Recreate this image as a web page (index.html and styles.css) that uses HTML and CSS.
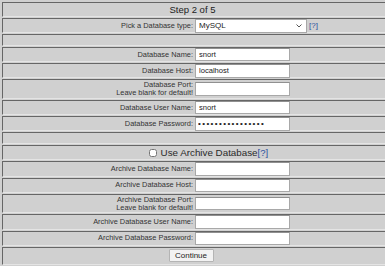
FILE: index.html
```html
<!DOCTYPE html>
<html lang="en">
<head>
    <meta charset="UTF-8">
    <title>Step 2 of 5</title>
    <link rel="stylesheet" href="styles.css">
</head>
<body>
    <div class="setup">
        <div class="row title">Step 2 of 5</div>
        <div class="row field">
            <span class="label">Pick a Database type:</span>
            <span class="control">
                <span class="select-wrap">
                    <select class="db-type">
                        <option>MySQL</option>
                    </select>
                    <svg class="chevron" width="6" height="4" viewBox="0 0 6 4">
                        <path d="M0.5 0.5 L3 3 L5.5 0.5" fill="none" stroke="#555" stroke-width="1"/>
                    </svg>
                </span>
                <a class="help" href="#">[?]</a>
            </span>
        </div>
        <div class="row empty"></div>
        <div class="row field">
            <span class="label">Database Name:</span>
            <span class="control"><input type="text" value="snort"></span>
        </div>
        <div class="row field">
            <span class="label">Database Host:</span>
            <span class="control"><input type="text" value="localhost"></span>
        </div>
        <div class="row field tall">
            <span class="label">Database Port:<br>Leave blank for default!</span>
            <span class="control"><input type="text"></span>
        </div>
        <div class="row field">
            <span class="label">Database User Name:</span>
            <span class="control"><input type="text" value="snort"></span>
        </div>
        <div class="row field">
            <span class="label">Database Password:</span>
            <span class="control"><input type="password" value="passwordpassword"></span>
        </div>
        <div class="row empty"></div>
        <div class="row archive">
            <label><input type="checkbox"> Use Archive Database</label><a class="help" href="#">[?]</a>
        </div>
        <div class="row field">
            <span class="label">Archive Database Name:</span>
            <span class="control"><input type="text"></span>
        </div>
        <div class="row field">
            <span class="label">Archive Database Host:</span>
            <span class="control"><input type="text"></span>
        </div>
        <div class="row field tall">
            <span class="label">Archive Database Port:<br>Leave blank for default!</span>
            <span class="control"><input type="text"></span>
        </div>
        <div class="row field">
            <span class="label">Archive Database User Name:</span>
            <span class="control"><input type="text"></span>
        </div>
        <div class="row field">
            <span class="label">Archive Database Password:</span>
            <span class="control"><input type="password"></span>
        </div>
        <div class="row submit">
            <button>Continue</button>
        </div>
    </div>
</body>
</html>
```

FILE: styles.css
```css
body {
    margin: 0;
    background: #d0d0d0;
    font-family: 'Liberation Sans', Arial, sans-serif;
    color: #333;
    overflow: hidden;
}

.setup {
    width: 390px;
    padding: 2px 0 0 2px;
    display: flex;
    flex-direction: column;
    gap: 1px;
}

.row {
    border-top: 1px solid #666;
    border-left: 1px solid #666;
    border-bottom: 1px solid #e4e4e4;
}

.title {
    height: 13px;
    text-align: center;
    font-size: 9.5px;
    line-height: 13px;
    color: #222;
    padding-right: 10px;
}

.field {
    height: 13.3px;
    display: grid;
    grid-template-columns: 190px 1fr;
    column-gap: 2px;
    align-items: center;
}

.field .label {
    text-align: right;
    font-size: 7.4px;
    line-height: 8px;
}

.field.tall {
    height: 17.5px;
}

.empty {
    height: 9.5px;
}

.control {
    display: flex;
    align-items: center;
}

.control input {
    box-sizing: border-box;
    width: 95px;
    height: 13.5px;
    margin: 0;
    padding: 0 3px;
    border: 1px solid #a8a8a8;
    border-top-color: #909090;
    background: #fff;
    font-family: 'Liberation Sans', Arial, sans-serif;
    font-size: 7.6px;
    color: #222;
    outline: none;
}

.control input[type="password"] {
    font-size: 8px;
    letter-spacing: 1.4px;
    padding-left: 2px;
}

.select-wrap {
    position: relative;
    display: inline-flex;
}

.db-type {
    appearance: none;
    -webkit-appearance: none;
    box-sizing: border-box;
    width: 112px;
    height: 13.5px;
    margin: 0;
    padding: 0 3px;
    border: 1px solid #a8a8a8;
    border-radius: 0;
    background: #fff;
    font-family: 'Liberation Sans', Arial, sans-serif;
    font-size: 8px;
    line-height: 11px;
    color: #222;
}

.chevron {
    position: absolute;
    right: 5px;
    top: 5px;
}

.help {
    color: #2b4f9e;
    text-decoration: none;
    font-size: 8px;
    margin-left: 2px;
}

.archive {
    height: 13.3px;
    text-align: center;
    font-size: 9.8px;
    line-height: 13px;
    padding-left: 22px;
    color: #2a2a2a;
}

.archive input {
    width: 8px;
    height: 8px;
    margin: 0 1px 0 0;
    vertical-align: -1px;
}

.archive .help {
    font-size: 9.5px;
    margin-left: 0;
}

.submit {
    height: 16px;
    display: flex;
    justify-content: center;
    align-items: flex-start;
    padding-right: 13px;
}

.submit button {
    margin-top: 1px;
    box-sizing: border-box;
    width: 45px;
    height: 13px;
    padding: 0;
    font-family: 'Liberation Sans', Arial, sans-serif;
    font-size: 8px;
    line-height: 11px;
    color: #222;
    background: #f2f2f2;
    border: 1px solid #b4b4b4;
    border-radius: 1px;
}
```
